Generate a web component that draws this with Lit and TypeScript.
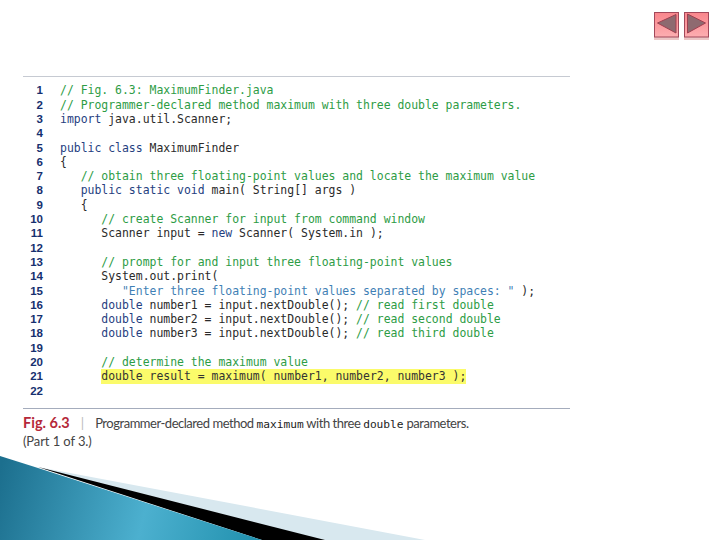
import { LitElement, html, css, svg } from "lit";
import { customElement } from "lit/decorators.js";

type Seg = [string, string];
const c = (t: string): Seg => ["cm", t];
const k = (t: string): Seg => ["kw", t];
const p = (t: string): Seg => ["", t];

const lines: { s: Seg[] }[] = [
  { s: [c("// Fig. 6.3: MaximumFinder.java")] },
  { s: [c("// Programmer-declared method maximum with three double parameters.")] },
  { s: [k("import"), p(" java.util.Scanner;")] },
  { s: [] },
  { s: [k("public class"), p(" MaximumFinder")] },
  { s: [p("{")] },
  { s: [c("   // obtain three floating-point values and locate the maximum value")] },
  { s: [k("   public static void"), p(" main( String[] args )")] },
  { s: [p("   {")] },
  { s: [c("      // create Scanner for input from command window")] },
  { s: [p("      Scanner input = "), k("new"), p(" Scanner( System.in );")] },
  { s: [] },
  { s: [c("      // prompt for and input three floating-point values")] },
  { s: [p("      System.out.print(")] },
  { s: [["str", '         "Enter three floating-point values separated by spaces: "'], p(" );")] },
  { s: [k("      double"), p(" number1 = input.nextDouble(); "), c("// read first double")] },
  { s: [k("      double"), p(" number2 = input.nextDouble(); "), c("// read second double")] },
  { s: [k("      double"), p(" number3 = input.nextDouble(); "), c("// read third double")] },
  { s: [] },
  { s: [c("      // determine the maximum value")] },
  { s: [p("      "), ["mark", "double result = maximum( number1, number2, number3 );"]] },
  { s: [] },
];

@customElement("app-root")
export class AppRoot extends LitElement {
  static styles = css`
    :host {
      display: block;
      position: relative;
      width: 720px;
      height: 540px;
      overflow: hidden;
      background: #fff;
      font-family: "Lato", sans-serif;
    }
    .nav {
      display: flex;
      justify-content: flex-end;
      gap: 5px;
      padding: 12px 11px 0 0;
      height: 28px;
    }
    .nav svg { display: block; }
    .figure {
      margin: 36px 150px 0 23px;
    }
    .rule { height: 1px; background: #a4acbc; }
    .rule.top { background: #c6cad2; }
    .code {
      display: grid;
      grid-template-columns: 20px 1fr;
      grid-auto-rows: 14.3px;
      column-gap: 17px;
      padding: 6.4px 0 9.6px;
    }
    .row { display: contents; }
    .num {
      font: bold 11.5px/14.3px "Liberation Sans", sans-serif;
      color: #16306f;
      text-align: right;
    }
    .src {
      font: 11.45px/14.3px "DejaVu Sans Mono", monospace;
      white-space: pre;
      color: #2a2a2a;
    }
    .cm { color: #2d9c45; }
    .kw { color: #25407f; }
    .str { color: #3f7fb5; }
    .mark { background: #fbfb6a; display: inline-block; height: 14.3px; color: #333; }
    .caption {
      padding-top: 5px;
      font-size: 13px;
      line-height: 18px;
      color: #444;
    }
    .desc { letter-spacing: -0.47px; }
    .part { letter-spacing: -0.1px; }
    .fig { color: #b5293a; font-weight: bold; font-size: 14.5px; }
    .bar { color: #bbb; margin: 0 11px; font-size: 13.4px; }
    .caption code {
      font: 11.2px "DejaVu Sans Mono", monospace;
      letter-spacing: 0;
      color: #222;
    }
    .deco { position: absolute; left: 0; bottom: 0; display: block; }
  `;

  private navBtn(left: boolean) {
    const tri = left ? "M3.5 11 L22 2.5 V21 Z" : "M3.5 2 L21.5 11 L3.5 21 Z";
    const id = left ? "gl" : "gr";
    return svg`<svg width="25" height="28" viewBox="0 0 25 28" xmlns="http://www.w3.org/2000/svg">
      <defs><linearGradient id="${id}" x1="0" y1="0" x2="0" y2="1">
        <stop offset="0" stop-color="#f9868c"/><stop offset="1" stop-color="#fdaeb1"/>
      </linearGradient></defs>
      <rect x="0" y="25" width="25" height="3" fill="#ecc6c6"/>
      <rect x="0.5" y="0.5" width="24" height="24.5" fill="url(#${id})" stroke="#a2485a"/>
      <path d="${tri}" fill="#8e6a70" stroke="#a04050" stroke-width="1"/>
    </svg>`;
  }

  render() {
    return html`
      <div class="nav">${this.navBtn(true)}${this.navBtn(false)}</div>
      <div class="figure">
        <div class="rule top"></div>
        <div class="code">
          ${lines.map(
            (l, i) => html`<div class="row">
              <div class="num">${i + 1}</div>
              <div class="src">${l.s.map(([cl, t]) => html`<span class=${cl}>${t}</span>`)}</div>
            </div>`
          )}
        </div>
        <div class="rule"></div>
        <div class="caption">
          <span class="fig">Fig. 6.3</span><span class="bar">|</span><span class="desc">Programmer-declared method
          <code>maximum</code> with three <code>double</code> parameters.</span><br /><span class="part">(Part 1 of 3.)</span>
        </div>
      </div>
      <svg class="deco" width="440" height="90" viewBox="0 450 440 90" xmlns="http://www.w3.org/2000/svg">
        <defs>
          <linearGradient id="teal" gradientUnits="userSpaceOnUse" x1="0" y1="470" x2="265" y2="540">
            <stop offset="0" stop-color="#1c6f8e"/>
            <stop offset="0.55" stop-color="#4cb0cf"/>
            <stop offset="1" stop-color="#1f8fac"/>
          </linearGradient>
        </defs>
        <polygon points="38,467 425,540 262,540" fill="#d8e8ef"/>
        <polygon points="38,467 325,540 262,540" fill="#000"/>
        <polygon points="0,456 38,468 262,540 0,540" fill="url(#teal)"/>
      </svg>
    `;
  }
}
